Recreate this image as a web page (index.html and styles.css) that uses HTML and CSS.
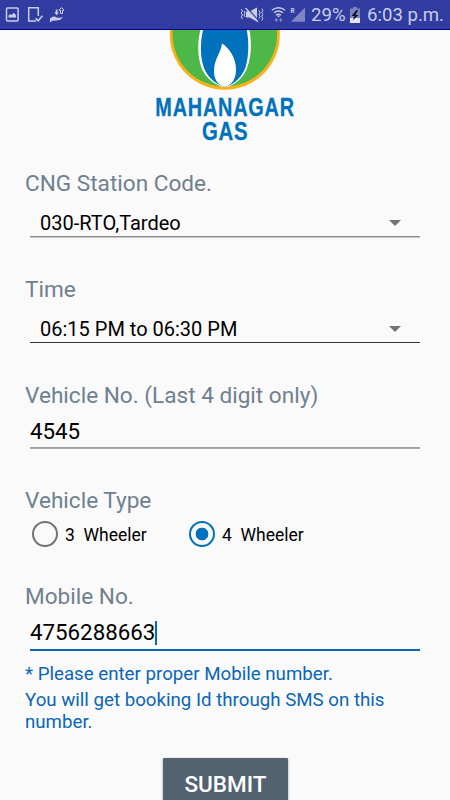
FILE: index.html
```html
<!DOCTYPE html>
<html lang="en">
<head>
    <meta charset="UTF-8">
    <meta name="viewport" content="width=device-width, initial-scale=1.0">
    <title>Mahanagar Gas - CNG Booking</title>
    <link rel="stylesheet" href="styles.css">
</head>
<body>

    <div class="status-bar">
        <svg class="status-left" width="70" height="29" viewBox="0 0 70 29">
            <g fill="none" stroke="#c9cdea" stroke-width="1.5">
                <rect x="6.5" y="8" width="11.6" height="13" rx="1"/>
                <path d="M36 21H28.7V7.8h9.6V16"/>
                <path d="M35.5 18.3l2.7 2.5 4.3-5"/>
            </g>
            <g fill="#c9cdea">
                <path d="M8.5 17.5v-2l2-1.5 1.2 1 2-2.2 2.4 2.5v2.2z"/>
                <path d="M50 18.5c3-2.5 5-2.5 6.500-1l4 .2 2.700-1.200-2.700 3.300-4.500.7-3.500.2-2.500 1.800z"/>
                <path d="M55.700 9.500h1.800v3h1.500l-2.400 2.700-2.400-2.700h1.500z"/>
                <path d="M61.500 7.500l2.500 2.800h-1.500v3.200h-2v-3.200h-1.500z" fill="none" stroke="#c9cdea"/>
            </g>
        </svg>
        <div class="status-right">
            <svg width="68" height="29" viewBox="0 0 68 29">
                <!-- vibrate -->
                <path d="M6 11.500h3.500L17 7.500v14L9.500 17.500H6z" fill="#c9cdea"/>
                <path d="M6.500 7L18.500 21" stroke="#303c9f" stroke-width="1.500"/>
                <path d="M5.500 8L18 21.700" stroke="#c9cdea" stroke-width="1.400"/>
                <path d="M1.200 9l1.300 2-1.300 2 1.300 2-1.300 2 1.300 2M4 11l1 2-1 2 1 2M19 10.500l1 2-1 2 1 2-1 2M21.800 8.500l1 2-1 2 1 2-1 2 1 2-1 2" fill="none" stroke="#c9cdea"/>
                <!-- wifi -->
                <g fill="none" stroke="#c9cdea" stroke-width="1.400">
                    <path d="M31.800 10.300q6.700-5 13.400 0M34 12.800q4.500-3.500 9 0M36 15.200q2.500-2 5 0"/>
                </g>
                <circle cx="38.500" cy="16.300" r="1" fill="#c9cdea"/>
                <path d="M36.300 22l-2-2.200h1.300V18H37v1.800h1.300zM40.700 18l2 2.200h-1.300V22H40v-1.800h-1.300z" fill="#8087c5"/>
                <!-- signal -->
                <path d="M65 7.500v14.300H51z" fill="#7f86c6"/>
                <text x="50.500" y="12.500" class="roaming">R</text>
            </svg>
            <span class="percent">29%</span>
            <svg class="battery" width="10" height="16" viewBox="0 0 10 16">
                <path d="M3 0h4v1.500h3V16H0V1.500h3z" fill="#7b82bd"/>
                <path d="M0 11h10v5H0z" fill="#e4e6f6"/>
                <path d="M6.500 3L1.500 9h3l-1.700 4.500L8.300 8H5.500L8 3z" fill="#0c0d1c"/>
            </svg>
            <span class="clock">6:03 p.m.</span>
        </div>
    </div>

    <div class="container">

        <svg class="logo" width="160" height="120" viewBox="0 0 160 120">
            <circle cx="79.800" cy="4.700" r="55" fill="#fbb017"/>
            <circle cx="79.800" cy="4.200" r="52.300" fill="#4db748"/>
            <path d="M57-6C52 10 52 27 57 39C60 46 67 53 77 57H83C93 53 99 46 102 38C107 26 107 9 103-6z" fill="#fff"/>
            <path d="M59.500-6C55 10 54.500 26 59 38C62 46 69 53 78 56.500H82C91 53 97 46 100.300 38C104 26 104.500 10 100.500-6z" fill="#0071bc"/>
            <path d="M77 13.500C76 23 69 29 69 41C69 49 72 54 78.500 56.500H81C88 54 91 48 91 39C91 28 84 17.500 77 13.500z" fill="#fff"/>
            <text x="10.300" y="85.800" textLength="139.500" lengthAdjust="spacingAndGlyphs">MAHANAGAR</text>
            <text x="57" y="110.300" textLength="46.500" lengthAdjust="spacingAndGlyphs">GAS</text>
        </svg>

        <div class="field">
            <div class="label">CNG Station Code.</div>
            <div class="spinner">
                <span class="station">030-RTO,Tardeo</span>
                <span class="arrow"></span>
            </div>
        </div>

        <div class="field">
            <div class="label">Time</div>
            <div class="spinner dark">
                <span class="time">06:15 PM to 06:30 PM</span>
                <span class="arrow"></span>
            </div>
        </div>

        <div class="field">
            <div class="label">Vehicle No. (Last 4 digit only)</div>
            <div class="text-input vehicle-input">4545</div>
        </div>

        <div class="field type-field">
            <div class="label">Vehicle Type</div>
            <div class="radio-group">
                <div class="radio-item"><span class="radio"></span><span class="radio-text">3&nbsp; Wheeler</span></div>
                <div class="radio-item"><span class="radio checked"></span><span class="radio-text">4&nbsp; Wheeler</span></div>
            </div>
        </div>

        <div class="field mobile-field">
            <div class="label">Mobile No.</div>
            <div class="text-input active">4756288663<span class="cursor"></span></div>
        </div>

        <p class="note">* Please enter proper Mobile number.</p>
        <p class="note info">You will get booking Id through SMS on this number.</p>

        <button class="submit">SUBMIT</button>

    </div>

</body>
</html>
```
FILE: styles.css
```css
body {
    font-family: Roboto, sans-serif;
    background-color: #fafafa;
    color: #000;
    margin: 0;
    height: 800px;
    overflow: hidden;
}

.status-bar {
    display: flex;
    justify-content: space-between;
    height: 29px;
    background-color: #303c9f;
    border-bottom: 1px solid #00008b;
    color: #c9cdea;
}

.status-right {
    display: flex;
    align-items: center;
    width: 210px;
    font-size: 18.6px;
    line-height: 29px;
}

.roaming {
    font-size: 6.5px;
    font-weight: 700;
    fill: #c9cdea;
}

.percent {
    margin-left: 3px;
    padding-top: 1px;
    width: 39px;
}

.battery {
    margin-right: 7px;
}

.clock {
    padding-top: 1px;
    white-space: nowrap;
}

.container {
    display: flex;
    flex-direction: column;
    padding: 0 30px 0 25px;
}

.logo {
    margin-left: 120px;
    flex: none;
}

.logo text {
    font-family: "Liberation Sans", Arial, sans-serif;
    font-size: 25px;
    font-weight: 700;
    letter-spacing: 1px;
    fill: #0071bc;
    stroke: #0071bc;
    stroke-width: 0.3px;
}

.field {
    height: 106px;
    flex: none;
}

.logo + .field {
    margin-top: 19px;
}

.label {
    height: 28px;
    line-height: 29px;
    font-size: 22.6px;
    color: #708090;
}

.spinner {
    display: flex;
    align-items: center;
    justify-content: space-between;
    height: 39px;
    margin-left: 5px;
    padding: 0 19px 0 10px;
    border-bottom: 1px solid #8c8c8c;
    box-shadow: 0 1px #c4c4c4;
    font-size: 20px;
}

.spinner span:first-child {
    padding-top: 12px;
}

.spinner.dark {
    border-bottom-color: #333;
    box-shadow: none;
}

.arrow {
    margin-top: 12px;
    border: 6px solid transparent;
    border-top-color: #737373;
    border-bottom: 0;
}

.text-input {
    display: flex;
    align-items: center;
    height: 34px;
    margin-left: 5px;
    padding-top: 4px;
    border-bottom: 1px solid #a0a0a0;
    box-shadow: 0 1px #a8a8a8;
    font-size: 22.3px;
    line-height: 34px;
}

.vehicle-input {
    height: 33px;
    padding-top: 5px;
}

.text-input.active {
    height: 35px;
    border-bottom: 2px solid #0a66b7;
    box-shadow: none;
}

.cursor {
    width: 2px;
    height: 24px;
    margin-top: 3px;
    background-color: #0a66b7;
}

.type-field {
    height: 96px;
    margin-top: -1px;
}

.radio-group {
    display: flex;
    padding: 7px 0 0 7px;
}

.radio-item {
    display: flex;
    align-items: center;
    width: 157px;
    height: 26px;
    font-size: 17.5px;
    line-height: 25px;
    white-space: nowrap;
}

.radio {
    box-sizing: border-box;
    width: 26px;
    height: 26px;
    margin-right: 7px;
    border: 2px solid #737373;
    border-radius: 50%;
}

.radio-text {
    padding-top: 2px;
}

.radio.checked {
    border-color: #0071bc;
    background: radial-gradient(circle, #0071bc 6px, transparent 6.7px);
}

.mobile-field {
    height: 81px;
}

.note {
    margin: 0;
    font-size: 18.7px;
    line-height: 22px;
    color: #0a66b7;
}

.info {
    margin-top: 4px;
}

.submit {
    width: 125px;
    height: 52px;
    margin-top: 25px;
    margin-left: 138px;
    border: none;
    border-radius: 1px;
    background-color: #536270;
    box-shadow: 0 1px 3px rgba(0, 0, 0, 0.35);
    color: #fff;
    font-family: Roboto, sans-serif;
    font-size: 22.5px;
    font-weight: 500;
}
```
